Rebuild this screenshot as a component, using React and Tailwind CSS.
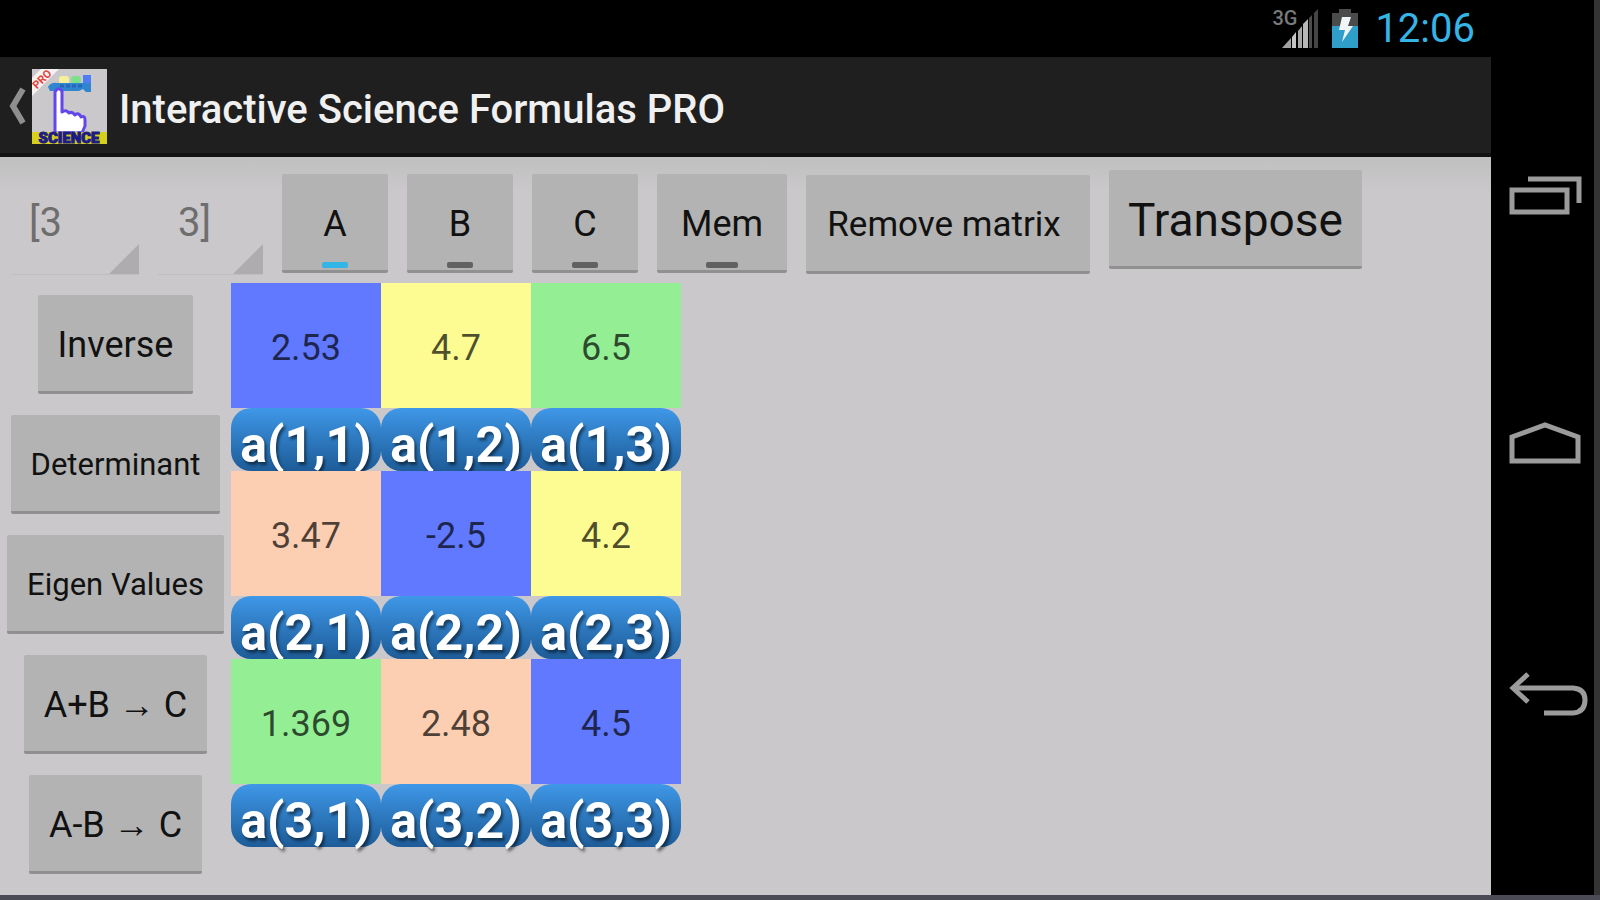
import { useState } from "react";
import clsx from "clsx";

const slots = [
  { name: "A", width: "w-[106px]", mark: "w-[26px]" },
  { name: "B", width: "w-[106px]", mark: "w-[26px]" },
  { name: "C", width: "w-[106px]", mark: "w-[26px]" },
  { name: "Mem", width: "w-[130px]", mark: "w-8" },
];

const operations = [
  { label: "Inverse", size: "text-[36px]" },
  { label: "Determinant", size: "text-[31px]" },
  { label: "Eigen Values", size: "text-[31px]" },
  { label: "A+B → C", size: "text-[36px]" },
  { label: "A-B → C", size: "text-[36px]" },
];

const initialMatrix = [
  ["2.53", "4.7", "6.5"],
  ["3.47", "-2.5", "4.2"],
  ["1.369", "2.48", "4.5"],
];

// Diagonals share a colour
const cellColors = [
  ["bg-[#6079ff]", "bg-[#fdfc92]", "bg-[#93ee94]"],
  ["bg-[#fccfb2]", "bg-[#6079ff]", "bg-[#fdfc92]"],
  ["bg-[#93ee94]", "bg-[#fccfb2]", "bg-[#6079ff]"],
];

function AppIcon() {
  return (
    <svg viewBox="0 0 75 75" className="w-[75px] h-[75px] shrink-0 overflow-visible">
      <rect width="75" height="75" fill="#cbc8cb" />
      <path d="M0 27V9L9 0H27Z" fill="#f6f1f1" />
      <text
        x="-11"
        y="18"
        fontSize="11"
        fontWeight="700"
        fill="#e2453f"
        transform="rotate(-45)"
      >
        PRO
      </text>
      <rect x="27" y="7" width="10" height="8" rx="3" fill="#f4f19a" />
      <rect x="39" y="7" width="10" height="8" rx="3" fill="#7fe08c" />
      <rect x="51" y="6" width="8" height="10" fill="#4f7df5" />
      <path d="M16 18Q19 13 25 14H59V23H54L51 20L47 22H18Z" fill="#2f86cf" />
      <path d="M28 17H50" stroke="#2467b8" strokeWidth="3" strokeDasharray="4 2" />
      <path
        d="M23 64V23Q26 17 30 22V43Q34 40 37 44Q40 42 43 46Q47 43 49 48Q53 46 53 51V57L50 64Z"
        fill="#fff"
        stroke="#6247ea"
        strokeWidth="3"
        strokeLinejoin="round"
      />
      <rect y="63" width="75" height="12" fill="#d6d01c" />
      <text
        x="37"
        y="74"
        fontSize="15"
        fontWeight="900"
        textAnchor="middle"
        fill="#1b1c86"
        stroke="#1b1c86"
      >
        SCIENCE
      </text>
    </svg>
  );
}

function StatusBar() {
  return (
    <div className="h-[57px] flex items-center justify-end pr-4 bg-black">
      <div className="relative w-[47px] h-10 mr-3">
        <span className="absolute left-0 -top-px text-[20px] leading-5 font-medium text-[#77797a]">
          3G
        </span>
        <svg viewBox="0 0 47 40" className="w-[47px] h-10">
          <path d="M10 39L19 29V39Z" fill="#a2a2a2" />
          <path d="M20 28L24 23V39H20Z" fill="#c4c4c4" />
          <path d="M26 22L30 17V39H26Z" fill="#a8a8a8" />
          <path d="M31 15L36 10V39H31Z" fill="#b8b8b8" />
          <path d="M37 9L40 6V39H37Z" fill="#4c4c4c" />
          <path d="M42 4L46 0V39H42Z" fill="#454545" />
        </svg>
      </div>
      <svg viewBox="0 0 28 40" className="w-7 h-10 mr-4">
        <path d="M8 0H20V4H27V18H1V4H8Z" fill="#4b4b4b" />
        <path d="M1 17H27V39H1Z" fill="#2f9fc9" />
        <path d="M11 8H20L17 17H22L11 33L14 21H8Z" fill="#f0f6f8" />
      </svg>
      <span className="text-[40px] leading-10 text-[#35b5e5]">12:06</span>
    </div>
  );
}

function SizeSelect({ label, value, width, align }) {
  return (
    <div className={clsx("relative border-b border-[#c0bec0]", width)}>
      <select
        aria-label={label}
        defaultValue={value}
        className={clsx(
          "appearance-none w-full h-[102px] pb-px bg-transparent text-[40px] text-[#6f6e6f] outline-none",
          align
        )}
      >
        <option>{value}</option>
      </select>
      <svg
        viewBox="0 0 30 30"
        className="absolute right-0 bottom-0 w-[30px] h-[30px] pointer-events-none"
      >
        <path d="M30 0V30H0Z" fill="#aeacae" />
      </svg>
    </div>
  );
}

function NavButton({ label, children }) {
  return (
    <button aria-label={label} className="h-[250px] flex items-center justify-center">
      <svg
        viewBox="0 0 91 48"
        className="w-[91px] h-12"
        fill="none"
        stroke="#9b9b9b"
        strokeWidth="5"
      >
        {children}
      </svg>
    </button>
  );
}

export default function App() {
  const [active, setActive] = useState("A");
  const [matrix, setMatrix] = useState(initialMatrix);

  const handleChange = (row, col, value) => {
    setMatrix(
      matrix.map((line, r) =>
        line.map((cell, c) => (r === row && c === col ? value : cell))
      )
    );
  };

  const buttonStyle =
    "h-[99px] pt-1 bg-[#b2b3b2] border-b-3 border-[#8f908f] rounded-xs text-[#111111] whitespace-nowrap";

  return (
    <div className="min-h-screen flex flex-col bg-black border-b-[5px] border-[#4a4b55] font-[Roboto,sans-serif]">
      <div className="flex-1 flex border-r-[6px] border-[#343434]">
        <div className="flex-1 min-w-0 flex flex-col">
          <StatusBar />

          {/* Action bar */}
          <header className="h-[100px] flex items-center pt-[2px] bg-[#1f1f1f] border-b-4 border-[#121212]">
            <button aria-label="Back" className="flex items-center pl-2">
              <svg viewBox="0 0 20 38" className="w-5 h-[38px] mr-1">
                <path d="M15 2L5 19L15 36" fill="none" stroke="#8f8f8f" strokeWidth="6" />
              </svg>
              <AppIcon />
            </button>
            <h1 className="ml-3 pt-2 text-[40px] font-medium text-[#f0f0f0]">
              Interactive Science Formulas PRO
            </h1>
          </header>

          <main className="flex-1 bg-[#cbc8cb]">
            {/* Toolbar */}
            <div className="flex items-baseline gap-[19px] pl-[11px] pt-[13px] bg-linear-to-b from-[#c0c0c0] to-[#cbc8cb] to-30%">
              <SizeSelect label="Rows" value="[3" width="w-32" align="pl-[18px]" />
              <SizeSelect label="Columns" value="3]" width="w-[105px]" align="pl-5" />
              {slots.map((slot) => (
                <button
                  key={slot.name}
                  aria-pressed={active === slot.name}
                  onClick={() => setActive(slot.name)}
                  className={clsx("relative text-[36px]", buttonStyle, slot.width)}
                >
                  {slot.name}
                  <span
                    className={clsx(
                      "absolute bottom-[2px] left-1/2 -translate-x-1/2 h-[6px] rounded-xs",
                      slot.mark,
                      active === slot.name ? "bg-[#33b5e5]" : "bg-[#616161]"
                    )}
                  />
                </button>
              ))}
              <button className={clsx("w-[284px] pr-2 text-[35px]", buttonStyle)}>
                Remove matrix
              </button>
              <button className={clsx("w-[253px] text-[46px]", buttonStyle)}>
                Transpose
              </button>
            </div>

            <div className="flex items-start">
              {/* Matrix operations */}
              <div className="w-[231px] flex flex-col items-center gap-[21px] pt-5">
                {operations.map((op) => (
                  <button key={op.label} className={clsx("px-5", buttonStyle, op.size)}>
                    {op.label}
                  </button>
                ))}
              </div>

              {/* Matrix cells */}
              <div className="grid grid-cols-[150px_150px_150px] pt-2">
                {matrix.map((line, r) =>
                  line.map((value, c) => (
                    <div key={`${r}-${c}`} className="flex flex-col">
                      <input
                        id={`cell-${r}-${c}`}
                        value={value}
                        onChange={(e) => handleChange(r, c, e.target.value)}
                        className={clsx(
                          "w-full h-[125px] pt-[5px] text-center text-[36px] text-black/70 outline-none",
                          cellColors[r][c]
                        )}
                      />
                      <label
                        htmlFor={`cell-${r}-${c}`}
                        className="h-[63px] pt-[7px] rounded-[20px] bg-linear-to-b from-[#3f98e8] to-[#1d5c98] text-center text-[50px] leading-[60px] font-bold text-white text-shadow-[2px_3px_3px_rgb(0_0_0/0.5)]"
                      >
                        a({r + 1},{c + 1})
                      </label>
                    </div>
                  ))
                )}
              </div>
            </div>
          </main>
        </div>

        {/* System navigation */}
        <nav className="w-[103px] shrink-0 flex flex-col justify-center pb-2">
          <NavButton label="Recent apps">
            <path d="M15 20H70V42H15Z" />
            <path d="M31 9H82V33" />
          </NavButton>
          <NavButton label="Home">
            <path d="M15 41V17L48 5L81 17V41Z" />
          </NavButton>
          <NavButton label="Back">
            <path d="M31 4L16 18L31 32" />
            <path d="M16 18H76Q88 19 88 30Q88 42 76 43H47" />
          </NavButton>
        </nav>
      </div>
    </div>
  );
}
